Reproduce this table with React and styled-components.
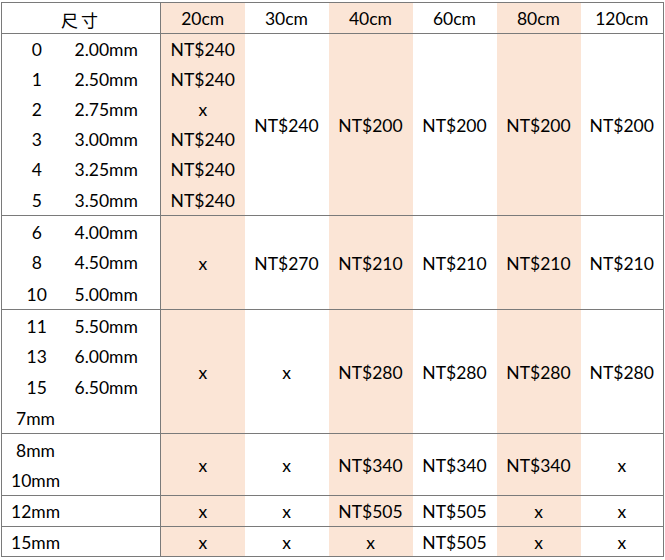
import React from "react";
import styled, { createGlobalStyle } from "styled-components";

const GlobalStyle = createGlobalStyle`
  html, body { margin: 0; padding: 0; background: #ffffff; }
  body { font-family: Lato, "Noto Sans CJK TC", sans-serif; color: #000000; }
`;

const LINE = "#7a7a7a";
const PEACH = "#fbe5d6";

const Page = styled.div`
  padding: 2px 0 0 1px;
`;

const PriceTable = styled.table`
  border-collapse: collapse;
  table-layout: fixed;
  width: 662px;
  border: 1px solid ${LINE};
  font-family: Lato, "Noto Sans CJK TC", sans-serif;
  font-size: 17.5px;
  line-height: 1;
  color: #000000;
`;

const Col = styled.col`
  width: ${(p) => p.$w}px;
  background: ${(p) => (p.$accent ? PEACH : "transparent")};
`;

const Group = styled.tbody`
  border-top: 1px solid ${LINE};
`;

const Row = styled.tr`
  height: ${(p) => p.$h}px;
`;

const Cell = styled.td`
  padding: 2px 0 0;
  text-align: center;
  vertical-align: middle;
  white-space: nowrap;
`;

const HeadCell = styled.th`
  padding: 2px 0 0;
  font-weight: 400;
  text-align: center;
  vertical-align: middle;
  white-space: nowrap;
  border-right: ${(p) => (p.$divider ? `1px solid ${LINE}` : "none")};
  font-family: ${(p) =>
    p.$cjk ? `"Noto Sans CJK TC", serif` : `Lato, sans-serif`};
  font-size: ${(p) => (p.$cjk ? "17px" : "17.5px")};
  letter-spacing: ${(p) => (p.$cjk ? "3px" : "0")};
`;

const NumCell = styled(Cell)`
  text-align: center;
`;

const MmCell = styled(Cell)`
  text-align: left;
  padding-left: 3px;
  border-right: 1px solid ${LINE};
`;

const WideSizeCell = styled(Cell)`
  text-align: left;
  padding-left: ${(p) => (p.$indent ? 14 : 9)}px;
  border-right: 1px solid ${LINE};
`;

const columns = ["20cm", "30cm", "40cm", "60cm", "80cm", "120cm"];

const groups = [
  {
    heights: [30, 30, 30, 30, 31, 31],
    sizes: [
      ["0", "2.00mm", "NT$240"],
      ["1", "2.50mm", "NT$240"],
      ["2", "2.75mm", "x"],
      ["3", "3.00mm", "NT$240"],
      ["4", "3.25mm", "NT$240"],
      ["5", "3.50mm", "NT$240"],
    ],
    prices: ["NT$240", "NT$200", "NT$200", "NT$200", "NT$200"],
  },
  {
    heights: [31, 31, 32],
    sizes: [
      ["6", "4.00mm"],
      ["8", "4.50mm"],
      ["10", "5.00mm"],
    ],
    prices: ["x", "NT$270", "NT$210", "NT$210", "NT$210", "NT$210"],
  },
  {
    heights: [31, 31, 31, 31],
    sizes: [
      ["11", "5.50mm"],
      ["13", "6.00mm"],
      ["15", "6.50mm"],
      { wide: "7mm", indent: true },
    ],
    prices: ["x", "x", "NT$280", "NT$280", "NT$280", "NT$280"],
  },
  {
    heights: [31, 31],
    sizes: [{ wide: "8mm", indent: true }, { wide: "10mm" }],
    prices: ["x", "x", "NT$340", "NT$340", "NT$340", "x"],
  },
  {
    heights: [31],
    sizes: [{ wide: "12mm" }],
    prices: ["x", "x", "NT$505", "NT$505", "x", "x"],
  },
  {
    heights: [30],
    sizes: [{ wide: "15mm" }],
    prices: ["x", "x", "x", "NT$505", "x", "x"],
  },
];

function SizeCells({ size }) {
  if (size.wide) {
    return (
      <WideSizeCell colSpan={2} $indent={size.indent}>
        {size.wide}
      </WideSizeCell>
    );
  }
  return (
    <>
      <NumCell>{size[0]}</NumCell>
      <MmCell>{size[1]}</MmCell>
    </>
  );
}

function PriceGroup({ group }) {
  const span = group.sizes.length;
  return (
    <Group>
      {group.sizes.map((size, i) => (
        <Row key={i} $h={group.heights[i]}>
          <SizeCells size={size} />
          {span > 1 && group.prices.length === 5 && (
            <Cell>{size[2]}</Cell>
          )}
          {i === 0 &&
            group.prices.map((p, j) => (
              <Cell key={j} rowSpan={span}>
                {p}
              </Cell>
            ))}
        </Row>
      ))}
    </Group>
  );
}

export default function App() {
  return (
    <Page>
      <GlobalStyle />
      <PriceTable>
        <colgroup>
          <Col $w={70} />
          <Col $w={89} />
          <Col $w={84} $accent />
          <Col $w={84} />
          <Col $w={84} $accent />
          <Col $w={84} />
          <Col $w={84} $accent />
          <Col $w={83} />
        </colgroup>
        <thead>
          <Row $h={31}>
            <HeadCell colSpan={2} $divider $cjk>
              尺寸
            </HeadCell>
            {columns.map((c) => (
              <HeadCell key={c}>{c}</HeadCell>
            ))}
          </Row>
        </thead>
        {groups.map((g, i) => (
          <PriceGroup key={i} group={g} />
        ))}
      </PriceTable>
    </Page>
  );
}
